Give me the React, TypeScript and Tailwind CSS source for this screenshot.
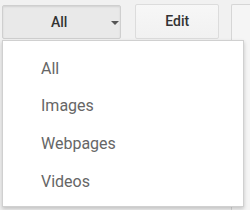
import React from 'react';

const items = ['All', 'Images', 'Webpages', 'Videos'];

export default function App() {
  return (
    <div className="relative w-[250px] h-[210px] overflow-hidden bg-[#f1f1f1] font-['Roboto',sans-serif]">
      {/* Toolbar */}
      <div className="flex items-start pt-[4px] pl-[2px]">
        <button className="relative mt-[1px] flex h-[34px] w-[127px] items-center rounded-[2px] border border-[#cfcfcf] bg-[#e9e9e9] shadow-[inset_0_1px_2px_rgba(0,0,0,0.1)] text-[14px] font-medium text-[#333]">
          <span className="ml-[48px]">All</span>
          <span className="absolute left-[108px] top-[15px] h-0 w-0 border-x-[4px] border-t-[4px] border-x-transparent border-t-[#555]" />
        </button>
        <button className="ml-[14px] flex h-[35px] w-[89px] items-center justify-center rounded-[2px] border border-[#dcdcdc] bg-gradient-to-b from-[#f7f7f7] to-[#f1f1f1] text-[14px] font-medium text-[#333]">
          Edit
        </button>
        <div className="ml-[12px] h-[220px] w-[20px] rounded-tl-[2px] border-l border-t border-[#d6d6d6] bg-[#f5f5f5]" />
      </div>

      {/* Dropdown menu */}
      <div className="absolute left-[2px] top-[40px] w-[242px] h-[167px] border border-[#d0d0d0] bg-white shadow-[0_2px_4px_rgba(0,0,0,0.2)]">
        <ul className="pt-[9px]">
          {items.map((item) => (
            <li key={item} className="flex h-[37.6px] items-center pl-[38px] text-[16px] text-[#666]">
              {item}
            </li>
          ))}
        </ul>
      </div>
    </div>
  );
}
